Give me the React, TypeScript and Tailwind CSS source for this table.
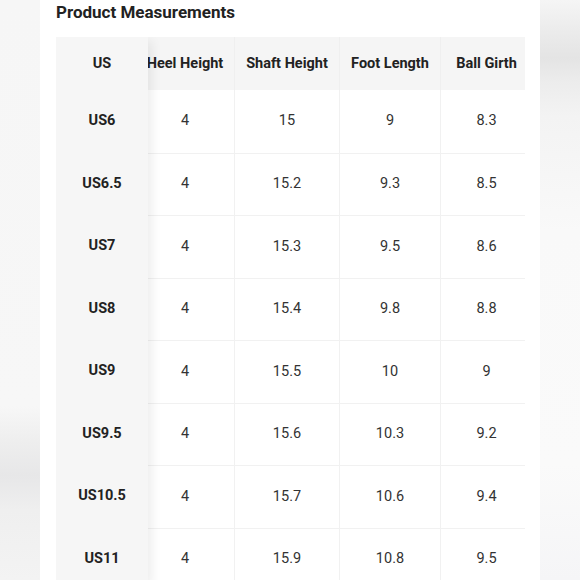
const rows = [
  ['US6', '4', '15', '9', '8.3'],
  ['US6.5', '4', '15.2', '9.3', '8.5'],
  ['US7', '4', '15.3', '9.5', '8.6'],
  ['US8', '4', '15.4', '9.8', '8.8'],
  ['US9', '4', '15.5', '10', '9'],
  ['US9.5', '4', '15.6', '10.3', '9.2'],
  ['US10.5', '4', '15.7', '10.6', '9.4'],
  ['US11', '4', '15.9', '10.8', '9.5'],
]

const headers = ['Heel Height', 'Shaft Height', 'Foot Length', 'Ball Girth']
const widths = ['w-[99px]', 'w-[105px]', 'w-[101px]', 'w-[92px]']

export default function App() {
  return (
    <div className="flex w-[580px] h-[580px] overflow-hidden font-['Roboto',sans-serif] bg-white">
      <div className="w-[40px] shrink-0 bg-[linear-gradient(180deg,#f6f6f6_0%,#f7f7f7_70%,#eeeeee_76%,#e7e7e8_82%,#efefef_88%,#f3f3f3_100%)]" />

      <div className="w-[500px] shrink-0 bg-white pl-4">
        <h2 className="text-[17px] leading-[22px] font-bold text-[#222] pt-[1px]">Product Measurements</h2>

        <div className="flex mt-[14px] w-[469px] overflow-hidden">
          {/* sticky size column */}
          <div className="w-[92px] shrink-0 relative z-10 bg-[#f6f6f6] shadow-[8px_0_10px_-4px_rgba(0,0,0,0.07)]">
            <div className="h-[53px] flex items-center justify-center text-[14.5px] font-bold text-[#222]">US</div>
            {rows.map((r) => (
              <div key={r[0]} className="h-[62.5px] flex items-center justify-center text-[14.5px] font-bold text-[#222]">
                {r[0]}
              </div>
            ))}
          </div>

          <div className="w-[377px] overflow-hidden">
            <div className="ml-[-12px] w-[397px]">
              <div className="flex h-[53px] bg-[#f5f5f5]">
                {headers.map((h, i) => (
                  <div
                    key={h}
                    className={`${widths[i]} shrink-0 flex items-center justify-center text-[14.5px] font-bold text-[#222] whitespace-nowrap border-r border-[#efefef]`}
                  >
                    {h}
                  </div>
                ))}
              </div>
              {rows.map((r, ri) => (
                <div key={r[0]} className={`flex h-[62.5px] ${ri > 0 ? 'border-t border-[#f1f1f1]' : ''}`}>
                  {r.slice(1).map((v, i) => (
                    <div
                      key={i}
                      className={`${widths[i]} shrink-0 flex items-center justify-center text-[14.5px] text-[#333] border-r border-[#f1f1f1]`}
                    >
                      {v}
                    </div>
                  ))}
                </div>
              ))}
            </div>
          </div>
        </div>
      </div>

      <div className="w-[40px] shrink-0 bg-[linear-gradient(180deg,#f5f5f5_0%,#ececec_5%,#e4e4e4_10%,#ececec_14%,#f3f3f3_20%,#f9f9f9_40%,#fafafa_80%,#f5f5f7_100%)]" />
    </div>
  )
}
